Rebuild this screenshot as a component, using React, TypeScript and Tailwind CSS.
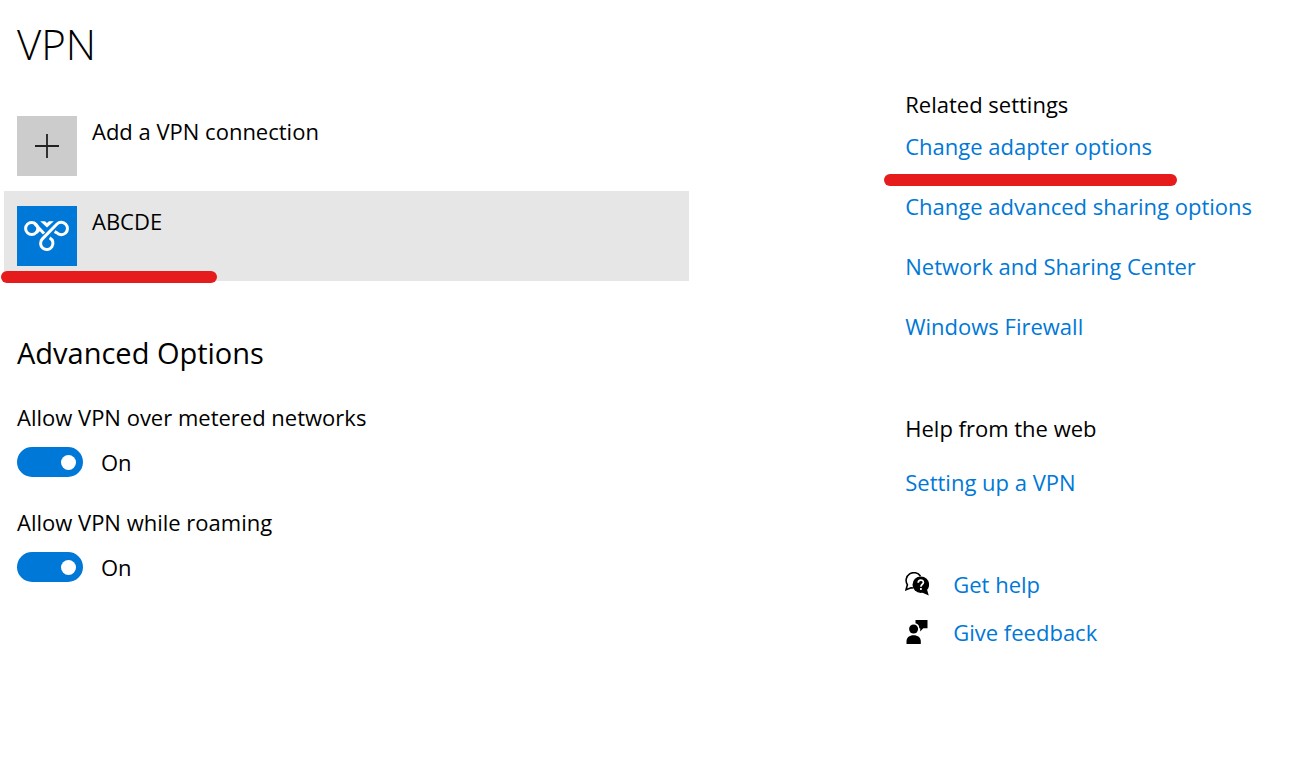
import React, { useState } from "react";

interface ToggleProps {
  id: string;
  label: string;
}

const Toggle: React.FC<ToggleProps> = ({ id, label }) => {
  const [on, setOn] = useState(true);

  return (
    <div>
      <label htmlFor={id} className="block">{label}</label>
      <div className="mt-[15px] flex h-[30px] items-center gap-[18px]">
        <input
          id={id}
          type="checkbox"
          role="switch"
          checked={on}
          onChange={(e) => setOn(e.target.checked)}
          className="flex h-[30px] w-[66px] appearance-none items-center rounded-full border-2 border-[#333333] px-[5px] before:size-[15px] before:rounded-full before:bg-[#333333] checked:justify-end checked:border-[#0078d7] checked:bg-[#0078d7] checked:before:bg-white"
        />
        <span>{on ? "On" : "Off"}</span>
      </div>
    </div>
  );
};

const PlusIcon = () => (
  <svg viewBox="0 0 60 60" className="size-[60px] shrink-0 bg-[#cccccc]" aria-hidden="true">
    <path d="M18 30h24M30 18v24" fill="none" stroke="#222222" strokeWidth="1.8" />
  </svg>
);

const VpnIcon = () => (
  <svg viewBox="0 0 60 60" className="size-[60px] shrink-0 bg-[#0078d7]" aria-hidden="true">
    <g fill="none" stroke="#ffffff" strokeWidth="3">
      <circle cx="14.7" cy="22.5" r="6.1" />
      <path d="M17.5 17.5L27 27.5M19.5 26.5L23.5 22.5" />
      <path d="M37.6 25.6L39.8 26.8A6.2 6.2 0 1 0 40 18L25.4 32.9A6.2 6.2 0 1 0 32.6 31.8" />
    </g>
    <path d="M23.2 15.2h4.8l2 1.8l2-1.8h4.8l-6.8 6.4z" fill="#ffffff" />
  </svg>
);

const HelpIcon = () => (
  <svg viewBox="0 0 24 24" className="size-6 shrink-0" aria-hidden="true">
    <path d="M15.5 4.2A7.8 7.8 0 1 0 2.4 12.8L1 17.8L6 15.7L8 16" fill="none" stroke="#000000" strokeWidth="1.6" />
    <circle cx="15.8" cy="12.7" r="8.3" />
    <path d="M17 20.5L23.8 23.5L21.8 17z" />
    <path d="M13.2 10.8C13.2 7.2 18.4 7.4 18.4 10.4C18.4 12.3 15.9 12.3 15.9 14.8M15.9 16V18" fill="none" stroke="#ffffff" strokeWidth="1.7" />
  </svg>
);

const FeedbackIcon = () => (
  <svg viewBox="0 0 24 24" className="size-6 shrink-0" aria-hidden="true">
    <circle cx="8.6" cy="9" r="4.5" />
    <path d="M1.5 24V21.5C1.5 17.3 4.4 15.2 8.6 15.2S15.8 17.3 15.8 21.5V24z" />
    <path d="M10.5 0H22.5V8.3H18.3L15.2 11.5V8.3H14.3C14.3 5.5 13.2 4 10.5 3.3z" />
  </svg>
);

const relatedLinks = [
  { label: "Change adapter options", marked: true },
  { label: "Change advanced sharing options" },
  { label: "Network and Sharing Center" },
  { label: "Windows Firewall" },
];

const supportLinks = [
  { label: "Get help", icon: <HelpIcon /> },
  { label: "Give feedback", icon: <FeedbackIcon /> },
];

const App: React.FC = () => (
  <div className="grid min-h-screen grid-cols-[25fr_14fr] gap-x-54 bg-white pl-1 font-['Open_Sans',sans-serif] text-[22px] leading-[30px] text-black">
    <main className="pt-[17px]">
      <h1 className="px-[13px] text-[42px] font-light leading-[54px]">VPN</h1>

      <div className="mt-[30px]">
        <button type="button" className="flex w-full items-start gap-[15px] px-[13px] py-[15px] text-left">
          <PlusIcon />
          <span>Add a VPN connection</span>
        </button>
        <div className="relative">
          <button type="button" className="flex w-full items-start gap-[15px] bg-[#e6e6e6] px-[13px] py-[15px] text-left">
            <VpnIcon />
            <span>ABCDE</span>
          </button>
          <span className="absolute -left-[3px] top-20 h-3 w-54 rounded-full bg-[#e61c1c]" />
        </div>
      </div>

      <section className="mt-[52px] px-[13px]">
        <h2 className="text-[29px] leading-10">Advanced Options</h2>
        <div className="mt-[29px] flex flex-col gap-[30px]">
          <Toggle id="metered" label="Allow VPN over metered networks" />
          <Toggle id="roaming" label="Allow VPN while roaming" />
        </div>
      </section>
    </main>

    <aside className="whitespace-nowrap pt-[89px]">
      <h2>Related settings</h2>
      <ul className="mt-3 flex flex-col gap-[30px]">
        {relatedLinks.map((link) => (
          <li key={link.label} className="relative">
            <a href="#" className="text-[#0078d7]">{link.label}</a>
            {link.marked && (
              <span className="absolute -left-[21px] top-[43px] h-3 w-[293px] rounded-full bg-[#e61c1c]" />
            )}
          </li>
        ))}
      </ul>

      <h2 className="mt-[72px]">Help from the web</h2>
      <a href="#" className="mt-6 block text-[#0078d7]">Setting up a VPN</a>

      <ul className="mt-[72px] flex flex-col gap-[18px]">
        {supportLinks.map((link) => (
          <li key={link.label}>
            <a href="#" className="flex items-center gap-6 text-[#0078d7]">
              <span className="text-black">{link.icon}</span>
              {link.label}
            </a>
          </li>
        ))}
      </ul>
    </aside>
  </div>
);

export default App;
